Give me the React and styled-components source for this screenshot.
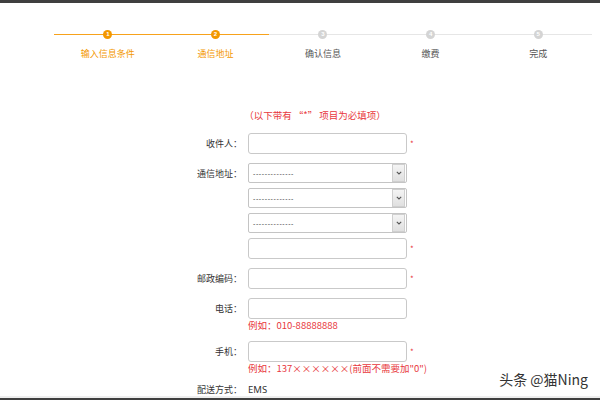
import React from "react";
import styled, { createGlobalStyle } from "styled-components";

const GlobalStyle = createGlobalStyle`
  html, body {
    margin: 0;
    padding: 0;
    background: #fff;
  }
  body {
    font-family: "Noto Sans CJK SC", "Noto Sans", "Liberation Sans", sans-serif;
    -webkit-font-smoothing: antialiased;
  }
`;

const steps = ["输入信息条件", "通信地址", "确认信息", "缴费", "完成"];
const doneCount = 2;

const Page = styled.div`
  position: relative;
  width: 600px;
  height: 400px;
  overflow: hidden;
  display: flex;
  flex-direction: column;
  background: #fff;
`;

const TopBar = styled.div`
  height: 3px;
  background: #3f3f3f;
  flex: none;
`;

const Stepper = styled.div`
  display: flex;
  padding: 27px 0 0 54px;
  flex: none;
`;

const Step = styled.div`
  width: 107.6px;
  display: flex;
  flex-direction: column;
  align-items: center;
  position: relative;

  &::before {
    content: "";
    position: absolute;
    left: 0;
    right: 0;
    top: 4px;
    height: 1px;
    background: ${(p) => (p.$done ? "#f7a21b" : "#e6e6e6")};
  }
`;

const Dot = styled.div`
  position: relative;
  width: 9px;
  height: 9px;
  border-radius: 50%;
  background: ${(p) => (p.$done ? "#f39800" : "#d4d4d4")};
  color: #fff;
  font-size: 6px;
  line-height: 9px;
  text-align: center;
  font-family: "Liberation Sans", sans-serif;
  font-weight: bold;
`;

const StepLabel = styled.div`
  margin-top: 9px;
  font-size: 9px;
  line-height: 12px;
  color: ${(p) => (p.$done ? "#f39800" : "#555")};
`;

const Notice = styled.div`
  margin-top: 49px;
  padding-left: 30px;
  text-align: center;
  font-size: 9.5px;
  line-height: 13px;
  color: #e8383d;
  flex: none;
`;

const Form = styled.div`
  margin-top: 11px;
  display: grid;
  grid-template-columns: 242px 159px 1fr;
  column-gap: 6px;
  align-items: center;
`;

const Label = styled.div`
  grid-column: 1;
  text-align: right;
  font-size: 9px;
  color: #333;
  margin-top: ${(p) => p.$mt || 0}px;
`;

const Input = styled.div`
  grid-column: 2;
  height: 19px;
  border: 1px solid #c9c9c9;
  border-radius: 3px;
  background: #fff;
  margin-top: ${(p) => p.$mt || 0}px;
`;

const Select = styled.div`
  grid-column: 2;
  height: 18px;
  border: 1px solid #c4c4c4;
  border-radius: 2px;
  background: #fff;
  display: flex;
  align-items: center;
  margin-top: ${(p) => p.$mt || 0}px;
  font-size: 7px;
  color: #444;
  padding-left: 4px;
  overflow: hidden;
`;

const SelectText = styled.span`
  flex: 1;
  letter-spacing: 0.6px;
  font-family: "Liberation Sans", sans-serif;
`;

const Arrow = styled.div`
  width: 11px;
  height: 16px;
  margin-right: 1px;
  border: 1px solid #cfcfcf;
  background: linear-gradient(#f4f4f4, #e0e0e0);
  display: flex;
  align-items: center;
  justify-content: center;
`;

const Star = styled.div`
  grid-column: 3;
  color: #e8383d;
  font-size: 8px;
  margin-left: -3px;
  margin-top: ${(p) => p.$mt || 0}px;
`;

const Hint = styled.div`
  grid-column: 2 / span 2;
  font-size: 9.5px;
  line-height: 12px;
  color: #e8383d;
  white-space: nowrap;
`;

const Value = styled.div`
  grid-column: 2;
  font-size: 9.5px;
  color: #333;
  margin-top: ${(p) => p.$mt || 0}px;
  font-family: "Noto Sans", sans-serif;
`;

const Spacer = styled.div`
  flex: 1;
`;

const BottomLine = styled.div`
  height: 2px;
  background: #eeeeee;
  flex: none;
`;

const BottomBar = styled.div`
  height: 4px;
  background: #3f3f3f;
  flex: none;
`;

const Watermark = styled.div`
  position: absolute;
  right: 12px;
  bottom: 11px;
  font-size: 14px;
  color: #333;
  text-shadow: 0 0 2px #fff, 0 0 2px #fff;
`;

function Chevron() {
  return (
    <svg width="6" height="4" viewBox="0 0 6 4">
      <path d="M0.8 0.8 L3 3 L5.2 0.8" fill="none" stroke="#555" strokeWidth="1.1" />
    </svg>
  );
}

function FakeSelect({ mt }) {
  return (
    <Select $mt={mt}>
      <SelectText>--------------</SelectText>
      <Arrow>
        <Chevron />
      </Arrow>
    </Select>
  );
}

export default function App() {
  return (
    <Page>
      <GlobalStyle />
      <TopBar />
      <Stepper>
        {steps.map((s, i) => (
          <Step key={s} $done={i < doneCount}>
            <Dot $done={i < doneCount}>{i + 1}</Dot>
            <StepLabel $done={i < doneCount}>{s}</StepLabel>
          </Step>
        ))}
      </Stepper>

      <Notice>（以下带有 “*” 项目为必填项）</Notice>

      <Form>
        <Label>收件人：</Label>
        <Input />
        <Star>*</Star>

        <Label $mt={9}>通信地址：</Label>
        <FakeSelect mt={9} />
        <div />

        <FakeSelect mt={5} />
        <FakeSelect mt={5} />
        <Input $mt={5} />
        <Star $mt={5}>*</Star>

        <Label $mt={9}>邮政编码：</Label>
        <Input $mt={9} />
        <Star $mt={9}>*</Star>

        <Label $mt={9}>电话：</Label>
        <Input $mt={9} />
        <div />
        <Hint>例如：010-88888888</Hint>

        <Label $mt={10}>手机：</Label>
        <Input $mt={10} />
        <Star $mt={10}>*</Star>
        <Hint>例如：137××××××(前面不需要加"0")</Hint>

        <Label $mt={9}>配送方式：</Label>
        <Value $mt={9}>EMS</Value>
      </Form>

      <Spacer />
      <BottomLine />
      <BottomBar />
      <Watermark>头条 @猫Ning</Watermark>
    </Page>
  );
}
